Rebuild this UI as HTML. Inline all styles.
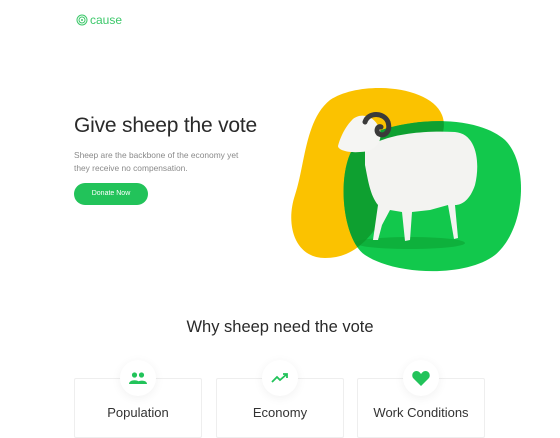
<!DOCTYPE html>
<html><head><meta charset="utf-8"><style>
*{margin:0;padding:0;box-sizing:border-box}
body{width:560px;height:420px;overflow:hidden;background:#fff;font-family:"Liberation Sans",sans-serif;position:relative;color:#222}
.a{position:absolute}
.logo{left:76px;top:13px;font-size:12px;color:#3cc86a;display:flex;align-items:center;gap:2px}
h1{position:absolute;left:74px;top:114px;font-size:21px;font-weight:normal;color:#2a2a2a;letter-spacing:-0.2px}
.p{left:74px;top:149px;font-size:8.4px;line-height:13px;color:#8a8a8a;width:176px}
.btn{left:74px;top:183px;width:74px;height:22px;border-radius:11px;background:#22c35a;color:#fff;font-size:7px;text-align:center;line-height:22px}
h2{position:absolute;left:0;width:560px;text-align:center;top:318px;font-size:16.5px;font-weight:normal;color:#2a2a2a}
.card{top:378px;width:128px;height:60px;border:1px solid #eee;border-radius:2px;text-align:center}
.card .t{position:absolute;top:26px;width:100%;font-size:13px;color:#333}
.ic{top:360px;width:36px;height:36px;border-radius:50%;background:#fff;box-shadow:0 2px 10px rgba(0,0,0,.06);display:flex;align-items:center;justify-content:center}
</style></head><body>
<div class="a logo"><svg width="12" height="12" viewBox="0 0 12 12"><circle cx="6" cy="6" r="5" fill="none" stroke="#3cc86a" stroke-width="1"/><circle cx="6" cy="6" r="3" fill="none" stroke="#3cc86a" stroke-width="1"/><circle cx="6" cy="6" r="1" fill="#3cc86a"/></svg>cause</div>
<h1>Give sheep the vote</h1>
<div class="a p">Sheep are the backbone of the economy yet<br>they receive no compensation.</div>
<div class="a btn">Donate Now</div>
<svg class="a" style="left:280px;top:80px" width="260" height="200" viewBox="280 80 260 200">
<path d="M330 100 C360 80 430 85 442 115 C452 140 420 170 395 200 C375 230 360 258 325 258 C295 258 285 225 295 195 C305 165 305 120 330 100Z" fill="#fbc200"/>
<path d="M360 140 C390 120 470 110 505 140 C530 165 525 230 495 255 C465 278 395 275 365 255 C340 238 335 160 360 140Z" fill="#12c84c"/>
<clipPath id="c"><path d="M330 100 C360 80 430 85 442 115 C452 140 420 170 395 200 C375 230 360 258 325 258 C295 258 285 225 295 195 C305 165 305 120 330 100Z"/></clipPath>
<path clip-path="url(#c)" d="M360 140 C390 120 470 110 505 140 C530 165 525 230 495 255 C465 278 395 275 365 255 C340 238 335 160 360 140Z" fill="#0ea030"/>
<ellipse cx="410" cy="243" rx="55" ry="6" fill="#0a9a2c" opacity=".5"/>
<path d="M365 150 C380 135 420 130 455 132 C478 134 480 165 475 185 C470 200 462 205 455 205 L458 238 L454 239 L448 205 L430 210 L412 212 L410 240 L405 241 L402 212 L390 210 L382 225 L378 240 L373 240 L378 205 C370 195 368 180 365 165 Z" fill="#f3f3f1"/>
<path d="M352 120 C360 112 375 115 380 130 C383 145 372 152 360 152 C348 153 338 150 338 146 C340 138 345 127 352 120Z" fill="#f5f5f3"/>
<path d="M365 122 C368 112 384 112 388 122 C391 132 384 137 379 134 C375 131 378 125 381 127" fill="none" stroke="#3a3a3a" stroke-width="5" stroke-linecap="round"/>
</svg>
<h2>Why sheep need the vote</h2>
<div class="a card" style="left:74px"><div class="t">Population</div></div>
<div class="a card" style="left:216px"><div class="t">Economy</div></div>
<div class="a card" style="left:357px"><div class="t">Work Conditions</div></div>
<div class="a ic" style="left:120px"><svg width="18" height="12" viewBox="0 0 18 12"><circle cx="5.5" cy="3" r="2.6" fill="#22c35a"/><circle cx="12.5" cy="3" r="2.6" fill="#22c35a"/><path d="M0 12 C0 7 11 7 11 12Z M7 12 C7 8 18 7 18 12Z" fill="#22c35a"/></svg></div>
<div class="a ic" style="left:262px"><svg width="18" height="12" viewBox="0 0 18 12"><path d="M1 10 L6 5 L9 8 L16 2 M12 2 L16 2 L16 6" fill="none" stroke="#22c35a" stroke-width="1.8"/></svg></div>
<div class="a ic" style="left:403px"><svg width="18" height="16" viewBox="0 0 18 16"><path d="M9 16 L1.5 8.5 C-1 6 0.5 1 4.5 1 C6.5 1 8 2.5 9 4 C10 2.5 11.5 1 13.5 1 C17.5 1 19 6 16.5 8.5Z" fill="#22c35a"/></svg></div>
</body></html>
